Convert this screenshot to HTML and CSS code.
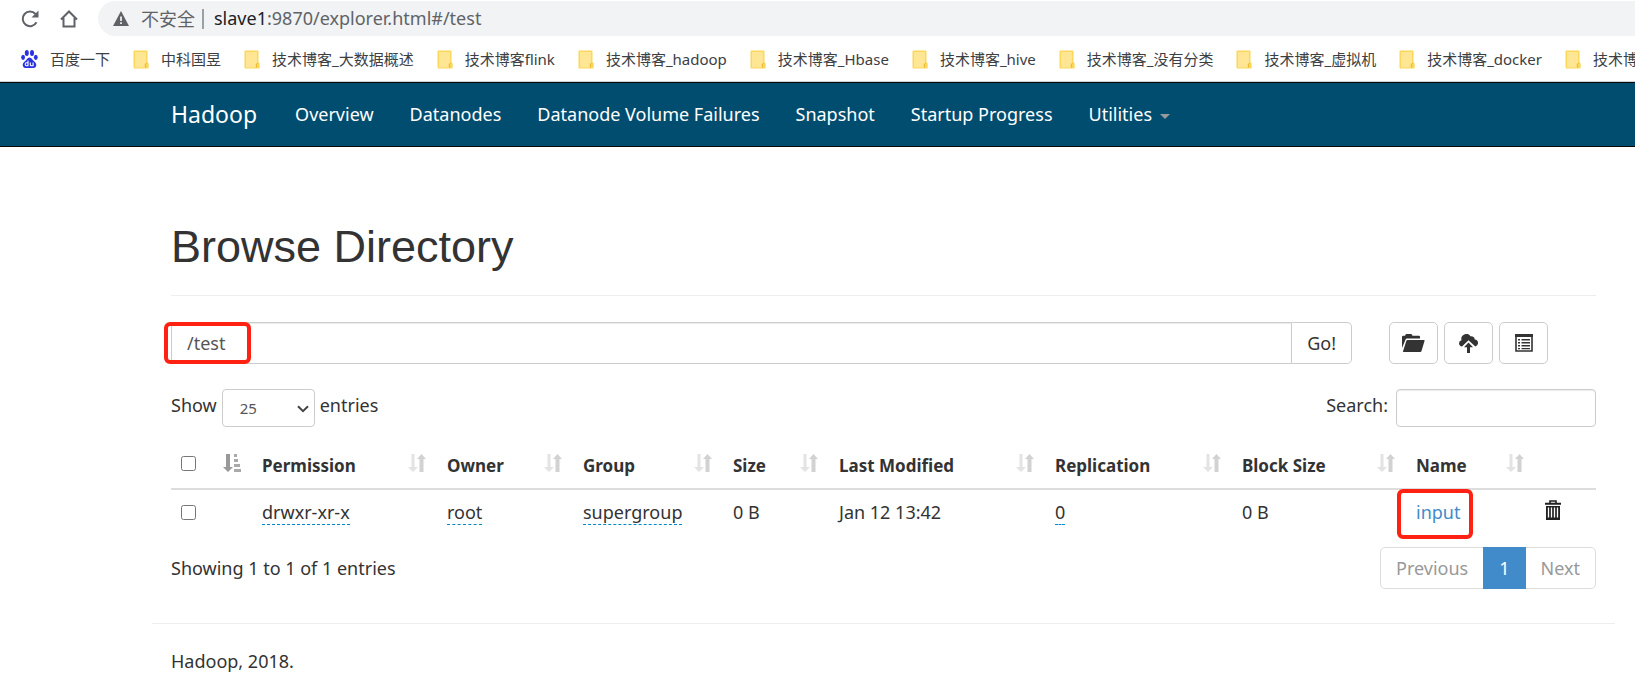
FILE: index.html
```html
<!DOCTYPE html>
<html lang="en">
<head>
<meta charset="utf-8">
<title>Browsing HDFS</title>
<link rel="stylesheet" href="styles.css">
</head>
<body>
<svg class="sprite" aria-hidden="true">
  <symbol id="folder" viewBox="0 0 16 19"><path d="M1.500 .5h12q1 0 1 1v10.500l1.200 1.500v4q0 1-1 1H1.500q-1 0-1-1v-16q0-1 1-1z" fill="#fbd75b"/><path d="M2 2h11v11l-1.500 1v3.500H2z" fill="#ffe694"/><path d="M12.500 17.500v-3.200q0-.8 1-.8" fill="none" stroke="#e9b92f"/></symbol>
  <symbol id="sort" viewBox="0 0 18 18"><path d="M3.500 0h3v13H10L5 18 0 13h3.500z" fill="#e3e3e3"/><path d="M11.500 18V5H9l4.500-5L18 5h-2.500v13z" fill="#d2d2d2"/></symbol>
</svg>
<header class="browser">
  <div class="toolbar">
    <button class="tool" aria-label="Reload"><svg width="20" height="20" viewBox="0 0 20 20"><path d="M16.500 13.200A7.300 7.300 0 1 1 15.500 5" fill="none" stroke="#5f6368" stroke-width="2"/><path d="M18.500 1.500v7h-7z" fill="#5f6368"/></svg></button>
    <button class="tool" aria-label="Home"><svg width="20" height="20" viewBox="0 0 20 20"><path d="M2 10.500 10 2.500l8 8M4.500 9v8.500h11V9" fill="none" stroke="#5f6368" stroke-width="2"/></svg></button>
    <div class="omnibox">
      <svg width="16" height="15" viewBox="0 0 16 15"><path d="M8 0l8 15H0z" fill="#5f6368"/><path d="M7.200 5.500h1.600v4.500H7.200zM7.200 11.200h1.600v1.700H7.200z" fill="#fff"/></svg>
      <span class="insecure">不安全</span>
      <span class="address"><b>slave1</b>:9870/explorer.html#/test</span>
    </div>
  </div>
  <nav class="bookmarks" aria-label="Bookmarks">
    <a href="#"><svg width="17" height="18" viewBox="0 0 17 18" fill="#2932e1"><ellipse cx="5.800" cy="3" rx="2" ry="2.900"/><ellipse cx="11" cy="3" rx="2" ry="2.900"/><ellipse cx="2.100" cy="7.300" rx="1.900" ry="2.600"/><ellipse cx="14.800" cy="7.300" rx="1.900" ry="2.600"/><path d="M8.500 7.500c2.200 0 3 2.500 4.500 3.800 1.800 1.500 2.800 2.800 2 4.900-1 2.300-3.500 1.700-6.500 1.700s-5.500.6-6.500-1.700c-.8-2.100.2-3.400 2-4.900C5.500 10 6.300 7.500 8.500 7.500z"/><path d="M7 10.500v5.300H5.500q-1.300 0-1.300-1.500t1.300-1.500H7M9.300 12.500v2.300q0 1 1 1h1.800v-3.300" fill="none" stroke="#fff" stroke-width="1.100"/></svg>百度一下</a>
    <a href="#"><svg width="16" height="19"><use href="#folder"/></svg>中科国昱</a>
    <a href="#"><svg width="16" height="19"><use href="#folder"/></svg>技术博客_大数据概述</a>
    <a href="#"><svg width="16" height="19"><use href="#folder"/></svg>技术博客flink</a>
    <a href="#"><svg width="16" height="19"><use href="#folder"/></svg>技术博客_hadoop</a>
    <a href="#"><svg width="16" height="19"><use href="#folder"/></svg>技术博客_Hbase</a>
    <a href="#"><svg width="16" height="19"><use href="#folder"/></svg>技术博客_hive</a>
    <a href="#"><svg width="16" height="19"><use href="#folder"/></svg>技术博客_没有分类</a>
    <a href="#"><svg width="16" height="19"><use href="#folder"/></svg>技术博客_虚拟机</a>
    <a href="#"><svg width="16" height="19"><use href="#folder"/></svg>技术博客_docker</a>
    <a href="#"><svg width="16" height="19"><use href="#folder"/></svg>技术博</a>
  </nav>
</header>
<nav class="navbar">
  <a class="brand" href="#">Hadoop</a>
  <a href="#">Overview</a>
  <a href="#">Datanodes</a>
  <a href="#">Datanode Volume Failures</a>
  <a href="#">Snapshot</a>
  <a href="#">Startup Progress</a>
  <a href="#">Utilities <span class="caret"></span></a>
</nav>
<main class="container">
  <h1>Browse Directory</h1>
  <div class="path-row">
    <form class="path-form">
      <input class="path" type="text" value="/test" aria-label="Directory">
      <button class="go" type="button">Go!</button>
      <span class="mark mark-path"></span>
    </form>
    <div class="actions">
      <button class="btn" aria-label="Create directory"><svg width="23" height="18" viewBox="0 0 23 18" fill="#333"><path d="M0 14V3q0-1.200 1.200-1.200H3L4 0h5.500l1 1.800H17q1 0 1 1V4.500H4.800q-.8 0-1.100.8z"/><path d="M5.500 6H22q.8 0 .6.800L19.500 17q-.3 1-1.200 1H1.500q-.8 0-.5-.8L4.300 7q.3-1 1.200-1z"/></svg></button>
      <button class="btn" aria-label="Upload files"><svg width="19" height="19" viewBox="0 0 19 19" fill="#333"><path d="M3 12.500A3.200 3.200 0 0 1 2.500 6.200 5 5 0 0 1 11.500 2.200a4 4 0 0 1 4.300 3.300 3.500 3.500 0 0 1 .5 6.900L9.500 6.300z"/><path d="M9.500 8.500l4.500 4.700h-3V19H8v-5.800H5z"/></svg></button>
      <button class="btn" aria-label="Cut and paste"><svg width="18" height="18" viewBox="0 0 18 18"><path d="M1 1h16v16H1z" fill="#fff" stroke="#333" stroke-width="1.600"/><path d="M0 0h18v3H0zM3 5h2v1.600H3zM6.500 5H15v1.600H6.500zM3 8h2v1.600H3zM6.500 8H15v1.600H6.500zM3 11h2v1.600H3zM6.500 11H15v1.600H6.500zM3 14h2v1.200H3zM6.500 14H15v1.200H6.500z" fill="#333"/></svg></button>
    </div>
  </div>
  <div class="filters">
    <label class="filter">Show
      <span class="select-wrap"><select><option>25</option></select><svg width="12" height="8" viewBox="0 0 12 8"><path d="M1 1.200l5 5 5-5" fill="none" stroke="#444" stroke-width="2"/></svg></span>
      entries</label>
    <label class="filter search">Search:<input type="search"></label>
  </div>
  <table>
    <colgroup><col class="c-check"><col class="c-perm"><col class="c-owner"><col class="c-group"><col class="c-size"><col class="c-date"><col class="c-repl"><col class="c-block"><col class="c-name"><col class="c-trash"></colgroup>
    <thead>
      <tr>
        <th><div class="head"><input type="checkbox" aria-label="Select all"><svg width="18" height="18" viewBox="0 0 18 18"><path d="M3 0h4v13h3l-5 5-5-5h3z" fill="#999"/><path d="M11 0h3v3h-3zM11 5h4v3h-4zM11 10h6v3h-6zM11 15h7v3h-7z" fill="#aaa"/></svg></div></th>
        <th><div class="head">Permission<svg width="18" height="18"><use href="#sort"/></svg></div></th>
        <th><div class="head">Owner<svg width="18" height="18"><use href="#sort"/></svg></div></th>
        <th><div class="head">Group<svg width="18" height="18"><use href="#sort"/></svg></div></th>
        <th><div class="head">Size<svg width="18" height="18"><use href="#sort"/></svg></div></th>
        <th><div class="head">Last Modified<svg width="18" height="18"><use href="#sort"/></svg></div></th>
        <th><div class="head">Replication<svg width="18" height="18"><use href="#sort"/></svg></div></th>
        <th><div class="head">Block Size<svg width="18" height="18"><use href="#sort"/></svg></div></th>
        <th><div class="head">Name<svg width="18" height="18"><use href="#sort"/></svg></div></th>
        <th></th>
      </tr>
    </thead>
    <tbody>
      <tr>
        <td><input type="checkbox" aria-label="Select input"></td>
        <td><span class="editable">drwxr-xr-x</span></td>
        <td><span class="editable">root</span></td>
        <td><span class="editable">supergroup</span></td>
        <td>0 B</td>
        <td>Jan 12 13:42</td>
        <td><span class="editable">0</span></td>
        <td>0 B</td>
        <td class="name"><a href="#">input</a><span class="mark mark-name"></span></td>
        <td class="tools"><button class="trash" aria-label="Delete"><svg width="16" height="20" viewBox="0 0 16 20"><path d="M5 3V1h6v2" fill="none" stroke="#222" stroke-width="1.600"/><path d="M0 2.700h16v2H0zM1 6h14v14H1z" fill="#222"/><path d="M3.500 7.500v10M6.500 7.500v10M9.500 7.500v10M12.500 7.500v10" stroke="#fff" stroke-width="1.300"/></svg></button></td>
      </tr>
    </tbody>
  </table>
  <div class="summary">
    <span>Showing 1 to 1 of 1 entries</span>
    <nav class="pages" aria-label="Pagination"><a href="#">Previous</a><a class="current" href="#">1</a><a href="#">Next</a></nav>
  </div>
</main>
<footer>Hadoop, 2018.</footer>
</body>
</html>
```
FILE: styles.css
```css
* { box-sizing: border-box; }
body {
  margin: 0;
  background: #fff;
  color: #333;
  font: 18px/25px "Noto Sans", "Noto Sans CJK SC", sans-serif;
  overflow-x: hidden;
}
input, select, button { font: inherit; color: inherit; }
button { padding: 0; border: 0; background: none; }
a { color: #428bca; text-decoration: none; }
svg { flex: none; }
.sprite { display: none; }

.browser { border-bottom: 1px solid #d0d2d5; }
.toolbar { display: flex; align-items: center; padding: 1px 0 0 20px; }
.tool { display: flex; margin-right: 19px; }
.omnibox {
  flex: 1;
  display: flex;
  align-items: center;
  height: 35px;
  padding-left: 15px;
  border-radius: 18px 0 0 18px;
  background: #f1f3f4;
  color: #5f6368;
  white-space: nowrap;
}
.insecure { margin-left: 12px; padding-right: 7px; border-right: 2px solid #9aa0a6; line-height: 20px; }
.address { margin-left: 10px; }
.address b { color: #202124; font-weight: 400; }
.bookmarks {
  display: flex;
  gap: 23px;
  padding: 12px 0 11px 21px;
  overflow: hidden;
  font-size: 15px;
  line-height: 22px;
}
.bookmarks a { display: flex; align-items: center; gap: 12px; color: #3c4043; white-space: nowrap; }

.navbar {
  display: flex;
  align-items: center;
  height: 65px;
  padding-left: 152px;
  border: solid #080808;
  border-width: 1px 0;
  background: #014d6f;
}
.navbar a { padding: 0 18px; color: #fff; }
.navbar .brand { padding: 0 20px 0 19px; font-size: 23px; }
.caret {
  display: inline-block;
  margin-left: 3px;
  border: 5px solid transparent;
  border-top-color: #999;
  border-bottom: 0;
  vertical-align: middle;
}

.container { margin: 0 20px 0 152px; padding: 0 19px; }
h1 {
  margin: 0;
  padding: 76px 0 24px;
  border-bottom: 1px solid #eee;
  font: 45px/48px "Liberation Sans", Arial, sans-serif;
}
.path-row { display: flex; gap: 37px; padding: 26px 48px 25px 0; }
.path-form { position: relative; flex: 1; display: flex; }
.path {
  flex: 1;
  min-width: 0;
  height: 42px;
  padding: 0 15px;
  border: 1px solid #ccc;
  border-radius: 5px 0 0 5px;
  box-shadow: inset 0 1px 1px rgba(0, 0, 0, .08);
  color: #555;
}
.go { padding: 0 15px; border: 1px solid #ccc; border-left: 0; border-radius: 0 5px 5px 0; }
.actions { display: flex; gap: 6px; }
.btn {
  display: flex;
  align-items: center;
  justify-content: center;
  width: 49px;
  height: 42px;
  border: 1px solid #ccc;
  border-radius: 5px;
}
.mark { position: absolute; border: 4px solid #ff2213; border-radius: 6px; pointer-events: none; }
.mark-path { left: -7px; top: 0; width: 87px; height: 42px; }
.mark-name { left: -9px; top: -1px; width: 76px; height: 50px; }

.filters { display: flex; justify-content: space-between; }
.filter { display: flex; gap: 5px; line-height: 33px; }
.filter.search { gap: 8px; }
.select-wrap { position: relative; }
.filter select, .filter input { height: 38px; border: 1px solid #ccc; border-radius: 4px; background: #fff; }
.filter select { appearance: none; display: block; width: 93px; padding: 0 17px; color: #555; font-size: 15px; }
.select-wrap svg { position: absolute; right: 6px; top: 16px; }
.filter input { width: 200px; padding: 0 12px; box-shadow: inset 0 1px 1px rgba(0, 0, 0, .08); }

table { width: 100%; margin-top: 16px; border-collapse: collapse; table-layout: fixed; }
.c-check { width: 81px; }
.c-perm { width: 185px; }
.c-owner { width: 136px; }
.c-group { width: 150px; }
.c-size { width: 106px; }
.c-date { width: 216px; }
.c-repl { width: 187px; }
.c-block { width: 174px; }
.c-name { width: 129px; }
.c-trash { width: 61px; }
th, td { padding: 10px; text-align: left; white-space: nowrap; }
th { border-bottom: 2px solid #ddd; font-size: 17px; }
input[type="checkbox"] { display: block; width: 15px; height: 15px; margin: 0; }
.head { display: flex; align-items: center; justify-content: space-between; padding-right: 1px; }
.head svg, .head input[type="checkbox"] { margin-bottom: 5px; }
.editable { display: inline-block; line-height: 24px; border-bottom: 1px dashed #08c; }
.name { position: relative; }
.tools { vertical-align: top; }
.trash { display: flex; }

.summary { display: flex; justify-content: space-between; margin-top: 12px; line-height: 42px; }
.pages { display: flex; border: 1px solid #ddd; border-radius: 5px; line-height: 40px; }
.pages a { padding: 0 15px; color: #999; }
.pages .current { margin: -1px 0; padding: 1px 16px; background: #428bca; color: #fff; }
footer { margin: 34px 20px 0 152px; padding: 25px 19px; border-top: 1px solid #eee; }
```
